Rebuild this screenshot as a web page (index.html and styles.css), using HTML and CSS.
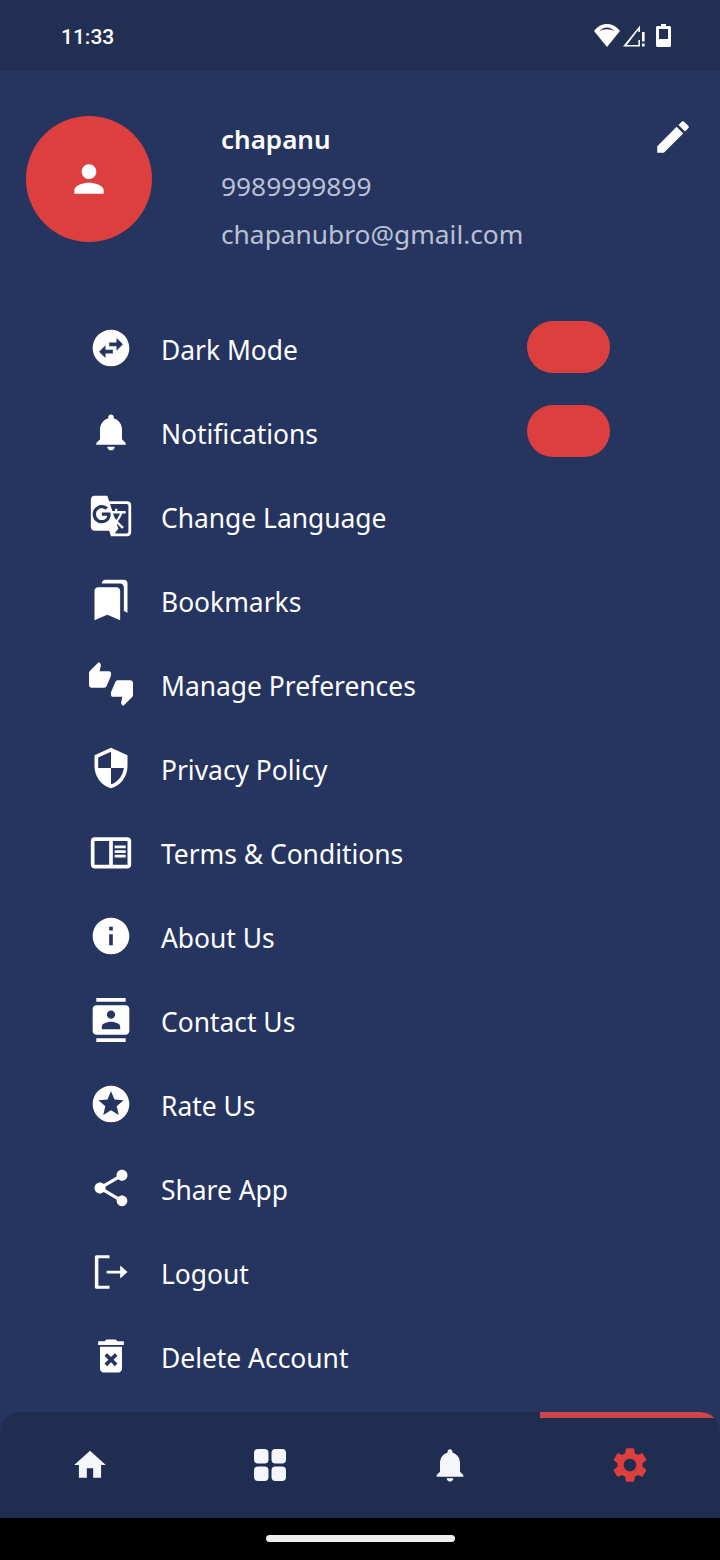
FILE: index.html
```html
<!DOCTYPE html>
<html lang="en">
<head>
<meta charset="utf-8">
<title>Settings</title>
<link rel="stylesheet" href="styles.css">
</head>
<body>
<div class="app">
  <header class="status">
    <span class="time">11:33</span>
    <div class="status-icons">
      <svg class="st-wifi" viewBox="0 0 26 23"><path d="M13 23L0 7C3.5 2.5 8 0 13 0s9.500 2.500 13 7L13 23zM5.500 7.500C7.500 6 10 5.200 13 5.200s5.500.8 7.500 2.300C18.500 4.800 16 3.600 13 3.600S7.500 4.800 5.500 7.500z" fill-rule="evenodd"/></svg>
      <svg class="st-signal" viewBox="0 0 22 23"><path d="M0 22.500L17 1.500V8h-1.600V5.800L3.800 21h11.600v-5H17v6.500H0z"/><rect x="19" y="8" width="2.600" height="9.500"/><rect x="19" y="19.500" width="2.600" height="3"/></svg>
      <svg class="st-batt" viewBox="0 0 15 23"><path d="M5 0h5v2h3.500c.8 0 1.500.7 1.500 1.500v18c0 .8-.7 1.500-1.500 1.500h-12C.7 23 0 22.300 0 21.500v-18C0 2.700.7 2 1.500 2H5V0zM3 5v10h9V5H3z" fill-rule="evenodd"/></svg>
    </div>
  </header>

  <main class="content">
    <section class="profile">
      <div class="avatar">
        <svg class="avatar-icon" viewBox="0 0 24 24"><path d="M12 12c2.210 0 4-1.790 4-4s-1.790-4-4-4-4 1.790-4 4 1.790 4 4 4zm0 2c-2.670 0-8 1.340-8 4v2h16v-2c0-2.660-5.330-4-8-4z"/></svg>
      </div>
      <div class="who">
        <div class="name">chapanu</div>
        <div class="sub">9989999899</div>
        <div class="sub">chapanubro@gmail.com</div>
      </div>
      <svg class="edit" viewBox="0 0 24 24"><path d="M3 17.250V21h3.750L17.810 9.940l-3.750-3.750L3 17.250zM20.710 7.040c.39-.39.39-1.020 0-1.410l-2.340-2.340c-.39-.39-1.020-.39-1.410 0l-1.830 1.830 3.750 3.750 1.830-1.830z"/></svg>
    </section>

    <ul class="menu">
      <li class="row">
        <svg class="ico" viewBox="0 0 24 24"><path d="M22 12c0-5.520-4.480-10-10-10S2 6.480 2 12s4.480 10 10 10 10-4.480 10-10zm-7-5.500l3.500 3.500-3.500 3.500V11h-4V9h4V6.500zm-6 11L5.500 14 9 10.500V13h4v2H9v2.500z"/></svg>
        <span class="label">Dark Mode</span>
        <span class="pill"></span>
      </li>
      <li class="row">
        <svg class="ico" viewBox="0 0 24 24"><path d="M12 22c1.100 0 2-.9 2-2h-4c0 1.100.89 2 2 2zm6-6v-5c0-3.070-1.640-5.640-4.500-6.320V4c0-.83-.67-1.500-1.500-1.500s-1.500.67-1.500 1.500v.68C7.630 5.360 6 7.920 6 11v5l-2 2v1h16v-1l-2-2z"/></svg>
        <span class="label">Notifications</span>
        <span class="pill"></span>
      </li>
      <li class="row">
        <svg class="ico" viewBox="0 0 24 24"><path d="M21 4H11l-1-3H3c-1.100 0-2 .9-2 2v15c0 1.100.9 2 2 2h8l1 3h9c1.100 0 2-.9 2-2V6c0-1.100-.9-2-2-2zM7 16c-2.760 0-5-2.240-5-5s2.240-5 5-5c1.350 0 2.480.5 3.350 1.300L9.030 8.570c-.38-.36-1.040-.78-2.030-.78-1.740 0-3.150 1.440-3.150 3.210S5.260 14.210 7 14.210c2.010 0 2.840-1.440 2.920-2.410H7v-1.710h4.680c.07.31.12.61.12 1.020C11.800 13.970 9.890 16 7 16zm6.170-5.420h3.700c-.43 1.250-1.110 2.430-2.050 3.470-.31-.35-.6-.72-.86-1.100l-.79-2.370zm8.330 9.920c0 .55-.45 1-1 1H14l2-2.500-1.040-3.100 3.100 3.100.92-.92-3.300-3.250.02-.02c1.130-1.250 1.930-2.690 2.400-4.220H20v-1.300h-4.530V8h-1.290v1.290h-1.440L11.460 5.500h9.040c.55 0 1 .45 1 1v14z"/></svg>
        <span class="label">Change Language</span>
      </li>
      <li class="row">
        <svg class="ico" viewBox="0 0 24 24"><path d="M19 18l2 1V3c0-1.100-.9-2-2-2H8.990C7.890 1 7 1.900 7 3h10c1.100 0 2 .9 2 2v13zM15 5H5c-1.100 0-2 .9-2 2v16l7-3 7 3V7c0-1.100-.9-2-2-2z"/></svg>
        <span class="label">Bookmarks</span>
      </li>
      <li class="row">
        <svg class="ico" viewBox="0 0 24 24"><path d="M12 6c0-.55-.45-1-1-1H5.820l.66-3.180.02-.23c0-.31-.13-.59-.33-.8L5.380 0 .44 4.940C.17 5.210 0 5.590 0 6v6.500c0 .83.67 1.500 1.500 1.500h6.750c.62 0 1.150-.38 1.380-.91l2.260-5.290c.07-.17.11-.36.11-.55V6zm10.500 4h-6.750c-.62 0-1.150.38-1.380.91l-2.260 5.290c-.07.17-.11.36-.11.55V18c0 .55.45 1 1 1h5.180l-.66 3.180-.02.24c0 .31.13.59.33.8l.79.78 4.940-4.940c.27-.27.44-.65.44-1.060v-6.500c0-.83-.67-1.500-1.500-1.500z"/></svg>
        <span class="label">Manage Preferences</span>
      </li>
      <li class="row">
        <svg class="ico" viewBox="0 0 24 24"><path d="M12 1L3 5v6c0 5.550 3.840 10.740 9 12 5.160-1.260 9-6.450 9-12V5l-9-4zm0 10.990h7c-.53 4.120-3.280 7.790-7 8.940V12H5V6.300l7-3.110v8.800z"/></svg>
        <span class="label">Privacy Policy</span>
      </li>
      <li class="row">
        <svg class="ico" viewBox="0 0 24 24"><path d="M21 4H3c-1.100 0-2 .9-2 2v13c0 1.100.9 2 2 2h18c1.100 0 2-.9 2-2V6c0-1.100-.9-2-2-2zM3 19V6h8v13H3zm18 0h-8V6h8v13zm-7-10.500h6V10h-6zm0 2.500h6v1.500h-6zm0 2.500h6V15h-6z"/></svg>
        <span class="label">Terms &amp; Conditions</span>
      </li>
      <li class="row">
        <svg class="ico" viewBox="0 0 24 24"><path d="M12 2C6.480 2 2 6.480 2 12s4.480 10 10 10 10-4.480 10-10S17.520 2 12 2zm1 15h-2v-6h2v6zm0-8h-2V7h2v2z"/></svg>
        <span class="label">About Us</span>
      </li>
      <li class="row">
        <svg class="ico" viewBox="0 0 24 24"><path d="M20 0H4v2h16V0zM4 24h16v-2H4v2zM20 4H4c-1.100 0-2 .9-2 2v12c0 1.100.9 2 2 2h16c1.100 0 2-.9 2-2V6c0-1.100-.9-2-2-2zm-8 2.750c1.240 0 2.250 1.010 2.250 2.250s-1.010 2.250-2.250 2.250S9.750 10.240 9.750 9 10.760 6.750 12 6.750zM17 17H7v-1.500c0-1.670 3.330-2.500 5-2.500s5 .83 5 2.500V17z"/></svg>
        <span class="label">Contact Us</span>
      </li>
      <li class="row">
        <svg class="ico" viewBox="0 0 24 24"><path d="M11.990 2C6.470 2 2 6.480 2 12s4.470 10 9.990 10C17.520 22 22 17.520 22 12S17.520 2 11.990 2zm4.240 16L12 15.450 7.770 18l1.120-4.810-3.730-3.230 4.920-.42L12 5l1.920 4.530 4.920.42-3.730 3.230L16.230 18z"/></svg>
        <span class="label">Rate Us</span>
      </li>
      <li class="row">
        <svg class="ico" viewBox="0 0 24 24"><path d="M18 16.080c-.76 0-1.440.3-1.960.77L8.910 12.700c.05-.23.09-.46.09-.7s-.04-.47-.09-.7l7.050-4.110c.54.5 1.250.81 2.040.81 1.660 0 3-1.340 3-3s-1.340-3-3-3-3 1.340-3 3c0 .24.04.47.09.7L8.040 9.810C7.500 9.310 6.790 9 6 9c-1.660 0-3 1.340-3 3s1.340 3 3 3c.79 0 1.500-.31 2.040-.81l7.120 4.160c-.05.21-.08.43-.08.65 0 1.610 1.310 2.920 2.920 2.920 1.610 0 2.920-1.310 2.920-2.920s-1.310-2.920-2.920-2.920z"/></svg>
        <span class="label">Share App</span>
      </li>
      <li class="row">
        <svg class="ico" viewBox="0 0 24 24"><path d="M4.200 2.800h7v1.700H5.100v15h6.100v1.700h-7c-.6 0-1-.4-1-1V3.800c0-.6.4-1 1-1zM21 12l-4-3.600v2.900H9.600v1.500H17v2.800z"/></svg>
        <span class="label">Logout</span>
      </li>
      <li class="row">
        <svg class="ico" viewBox="0 0 24 24"><path d="M6 19c0 1.100.9 2 2 2h8c1.100 0 2-.9 2-2V7H6v12zm2.460-7.120l1.410-1.410L12 12.590l2.120-2.120 1.410 1.410L13.410 14l2.120 2.120-1.410 1.410L12 15.410l-2.120 2.120-1.410-1.410L10.590 14l-2.130-2.120zM15.500 4l-1-1h-5l-1 1H5v2h14V4z"/></svg>
        <span class="label">Delete Account</span>
      </li>
    </ul>
  </main>

  <nav class="tabs">
    <div class="tab">
      <svg class="tab-home" viewBox="0 0 24 24"><path d="M10 20v-6h4v6h5v-8h3L12 3 2 12h3v8z"/></svg>
    </div>
    <div class="tab">
      <svg class="tab-grid" viewBox="0 0 32 32"><rect width="14.500" height="14.500" rx="4"/><rect x="17.500" width="14.500" height="14.500" rx="4"/><rect y="17.500" width="14.500" height="14.500" rx="4"/><rect x="17.500" y="17.500" width="14.500" height="14.500" rx="4"/></svg>
    </div>
    <div class="tab">
      <svg class="tab-bell" viewBox="0 0 24 24"><path d="M12 22c1.100 0 2-.9 2-2h-4c0 1.100.89 2 2 2zm6-6v-5c0-3.070-1.640-5.640-4.500-6.320V4c0-.83-.67-1.500-1.500-1.500s-1.500.67-1.500 1.500v.68C7.630 5.360 6 7.920 6 11v5l-2 2v1h16v-1l-2-2z"/></svg>
    </div>
    <div class="tab tab-active">
      <svg class="tab-gear" viewBox="0 0 24 24"><path d="M19.140 12.940c.04-.3.06-.61.06-.94 0-.32-.02-.64-.07-.94l2.030-1.580c.18-.14.23-.41.12-.61l-1.920-3.320c-.12-.22-.37-.29-.59-.22l-2.390.96c-.5-.38-1.030-.7-1.620-.94l-.36-2.540c-.04-.24-.24-.41-.48-.41h-3.840c-.24 0-.43.17-.47.41l-.36 2.540c-.59.24-1.130.57-1.620.94l-2.390-.96c-.22-.08-.47 0-.59.22L2.740 8.870c-.12.21-.08.47.12.61l2.030 1.580c-.05.3-.09.63-.09.94s.02.64.07.94l-2.030 1.580c-.18.14-.23.41-.12.61l1.920 3.320c.12.22.37.29.59.22l2.390-.96c.5.38 1.030.7 1.620.94l.36 2.540c.05.24.24.41.48.41h3.840c.24 0 .44-.17.47-.41l.36-2.540c.59-.24 1.130-.56 1.620-.94l2.390.96c.22.08.47 0 .59-.22l1.920-3.320c.12-.22.07-.47-.12-.61l-2.010-1.580zM12 15.600c-1.980 0-3.600-1.620-3.600-3.600s1.620-3.600 3.600-3.600 3.600 1.620 3.600 3.600-1.620 3.600-3.600 3.600z"/></svg>
    </div>
  </nav>

  <footer class="gesture"><span class="handle"></span></footer>
</div>
</body>
</html>
```

FILE: styles.css
```css
* { box-sizing: border-box; }
html, body { margin: 0; padding: 0; }
body { background: #000; font-family: "Noto Sans", sans-serif; color: #fff; }
svg { display: block; fill: currentColor; }

.app { width: 720px; height: 1560px; display: flex; flex-direction: column; background: #25355f; overflow: hidden; }

.status { height: 71px; flex: none; background: #212f53; display: flex; align-items: center; justify-content: space-between; padding: 2px 49px 0 61px; }
.time { font-family: Roboto, sans-serif; font-weight: 500; font-size: 21px; }
.status-icons { display: flex; align-items: center; gap: 3px; margin-top: -2px; }
.st-wifi { width: 26px; height: 23px; }
.st-signal { width: 22px; height: 23px; }
.st-batt { width: 15px; height: 23px; margin-left: 8px; }

.content { flex: 1; min-height: 0; }

.profile { display: flex; align-items: flex-start; padding: 45px 27px 0 26px; }
.avatar { width: 126px; height: 126px; flex: none; border-radius: 50%; background: #dd3f3e; display: flex; align-items: center; justify-content: center; }
.avatar-icon { width: 44px; height: 44px; }
.who { flex: 1; margin-left: 69px; }
.name { font-size: 26px; font-weight: 600; line-height: 47px; }
.sub { font-size: 26.3px; line-height: 47px; color: #b9c1d6; }
.sub:last-child { padding-top: 1px; }
.edit { width: 42px; height: 42px; flex: none; margin-top: 0; margin-right: -1px; }

.menu { list-style: none; margin: 50px 0 0; padding: 0 110px 0 89px; }
.row { height: 84px; display: flex; align-items: center; }
.ico { width: 44px; height: 44px; flex: none; margin-top: -4px; }
.label { flex: 1; margin-left: 28px; font-size: 26.4px; line-height: 36px; }
.pill { width: 83px; height: 52px; flex: none; border-radius: 26px; background: #dd3f3e; margin-top: -6px; }

.tabs { height: 106px; flex: none; display: grid; grid-template-columns: repeat(4, 1fr); background: #1f2d50; border-radius: 20px 20px 0 0; overflow: hidden; }
.tab { display: flex; align-items: center; justify-content: center; color: #f3f6fb; }
.tab-active { color: #dd3f3e; border-top: 6px solid #cf4649; padding-bottom: 6px; }
.tab-home { width: 38px; height: 38px; }
.tab-grid { width: 32px; height: 32px; }
.tab-bell { width: 40px; height: 40px; }
.tab-gear { width: 42px; height: 42px; }

.gesture { height: 42px; flex: none; background: #000; display: flex; justify-content: center; padding-top: 17px; }
.handle { width: 189px; height: 7px; border-radius: 4px; background: #eee; }
```
